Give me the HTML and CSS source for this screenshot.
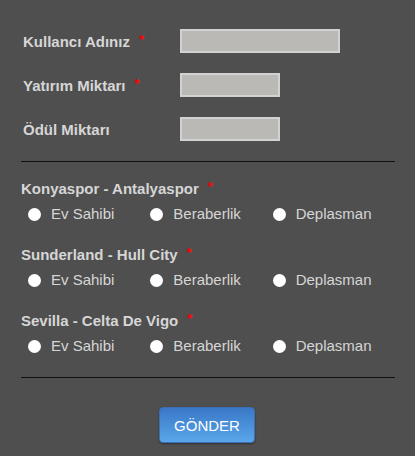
FILE: index.html
```html
<!DOCTYPE html>
<html lang="tr">
<head>
<meta charset="utf-8">
<title>Form</title>
<link rel="stylesheet" href="styles.css">
</head>
<body>
<form class="form">
  <div class="fields">
    <div class="field">
      <label class="field-label">Kullancı Adınız<span class="req">*</span></label>
      <input class="input input-wide" type="text">
    </div>
    <div class="field">
      <label class="field-label">Yatırım Miktarı<span class="req">*</span></label>
      <input class="input input-short" type="text">
    </div>
    <div class="field">
      <label class="field-label">Ödül Miktarı</label>
      <input class="input input-short" type="text">
    </div>
  </div>
  <hr class="divider">
  <div class="matches">
    <div class="match">
      <div class="match-title">Konyaspor - Antalyaspor<span class="req">*</span></div>
      <div class="options">
        <label class="option"><input class="radio" type="radio" name="m1">Ev Sahibi</label>
        <label class="option"><input class="radio" type="radio" name="m1">Beraberlik</label>
        <label class="option"><input class="radio" type="radio" name="m1">Deplasman</label>
      </div>
    </div>
    <div class="match">
      <div class="match-title">Sunderland - Hull City<span class="req">*</span></div>
      <div class="options">
        <label class="option"><input class="radio" type="radio" name="m2">Ev Sahibi</label>
        <label class="option"><input class="radio" type="radio" name="m2">Beraberlik</label>
        <label class="option"><input class="radio" type="radio" name="m2">Deplasman</label>
      </div>
    </div>
    <div class="match">
      <div class="match-title">Sevilla - Celta De Vigo<span class="req">*</span></div>
      <div class="options">
        <label class="option"><input class="radio" type="radio" name="m3">Ev Sahibi</label>
        <label class="option"><input class="radio" type="radio" name="m3">Beraberlik</label>
        <label class="option"><input class="radio" type="radio" name="m3">Deplasman</label>
      </div>
    </div>
  </div>
  <hr class="divider divider-bottom">
  <div class="actions">
    <button class="submit" type="button">GÖNDER</button>
  </div>
</form>
</body>
</html>
```
FILE: styles.css
```css
html, body {
  margin: 0;
  padding: 0;
  background: #4f4f4f;
}
body {
  font-family: "Liberation Sans", Arial, sans-serif;
  color: #d6d6d6;
  width: 415px;
  height: 456px;
  overflow: hidden;
}
.form {
  width: 374px;
  padding: 29px 0 0 21px;
}
.fields {
  display: flex;
  flex-direction: column;
  gap: 20px;
  padding-left: 2px;
}
.field {
  display: flex;
  align-items: center;
  height: 24px;
}
.field-label {
  width: 157px;
  font-size: 15px;
  font-weight: bold;
  line-height: 17px;
}
.req {
  position: relative;
  top: -3px;
  color: #ff0000;
  font-size: 13px;
  font-weight: bold;
  line-height: 0;
  margin-left: 9px;
}
.input {
  box-sizing: border-box;
  height: 24px;
  margin: 0;
  padding: 0;
  background: #bbb9b6;
  border: 2px solid #d2d2d2;
  outline: none;
}
.input-wide { width: 160px; }
.input-short { width: 100px; }
.divider {
  margin: 20px 0 0 0;
  height: 0;
  border: 0;
  border-top: 1px solid #111;
}
.divider-bottom {
  margin-top: 21px;
}
.matches {
  display: flex;
  flex-direction: column;
  gap: 22px;
  padding-top: 18px;
}
.match-title {
  font-size: 15px;
  font-weight: bold;
  line-height: 17px;
  height: 17px;
}
.options {
  display: flex;
  margin-top: 7px;
  padding-left: 7px;
  height: 20px;
}
.option {
  display: flex;
  align-items: center;
  width: 123px;
  font-size: 15px;
  line-height: 20px;
}
.radio {
  appearance: none;
  -webkit-appearance: none;
  width: 13px;
  height: 13px;
  margin: 0 10px 0 0;
  border-radius: 50%;
  background: #ffffff;
  border: 0;
}
.actions {
  display: flex;
  justify-content: center;
  padding-top: 29px;
}
.submit {
  box-sizing: border-box;
  width: 96px;
  height: 36px;
  margin-left: -2px;
  border: 1px solid #3b70b4;
  border-radius: 4px;
  background: linear-gradient(to bottom, #3a77c6, #5aa7ea);
  color: #ffffff;
  font-family: "Liberation Sans", Arial, sans-serif;
  font-size: 15px;
  box-shadow: 0 1px 2px rgba(0,0,0,0.4);
}
```
